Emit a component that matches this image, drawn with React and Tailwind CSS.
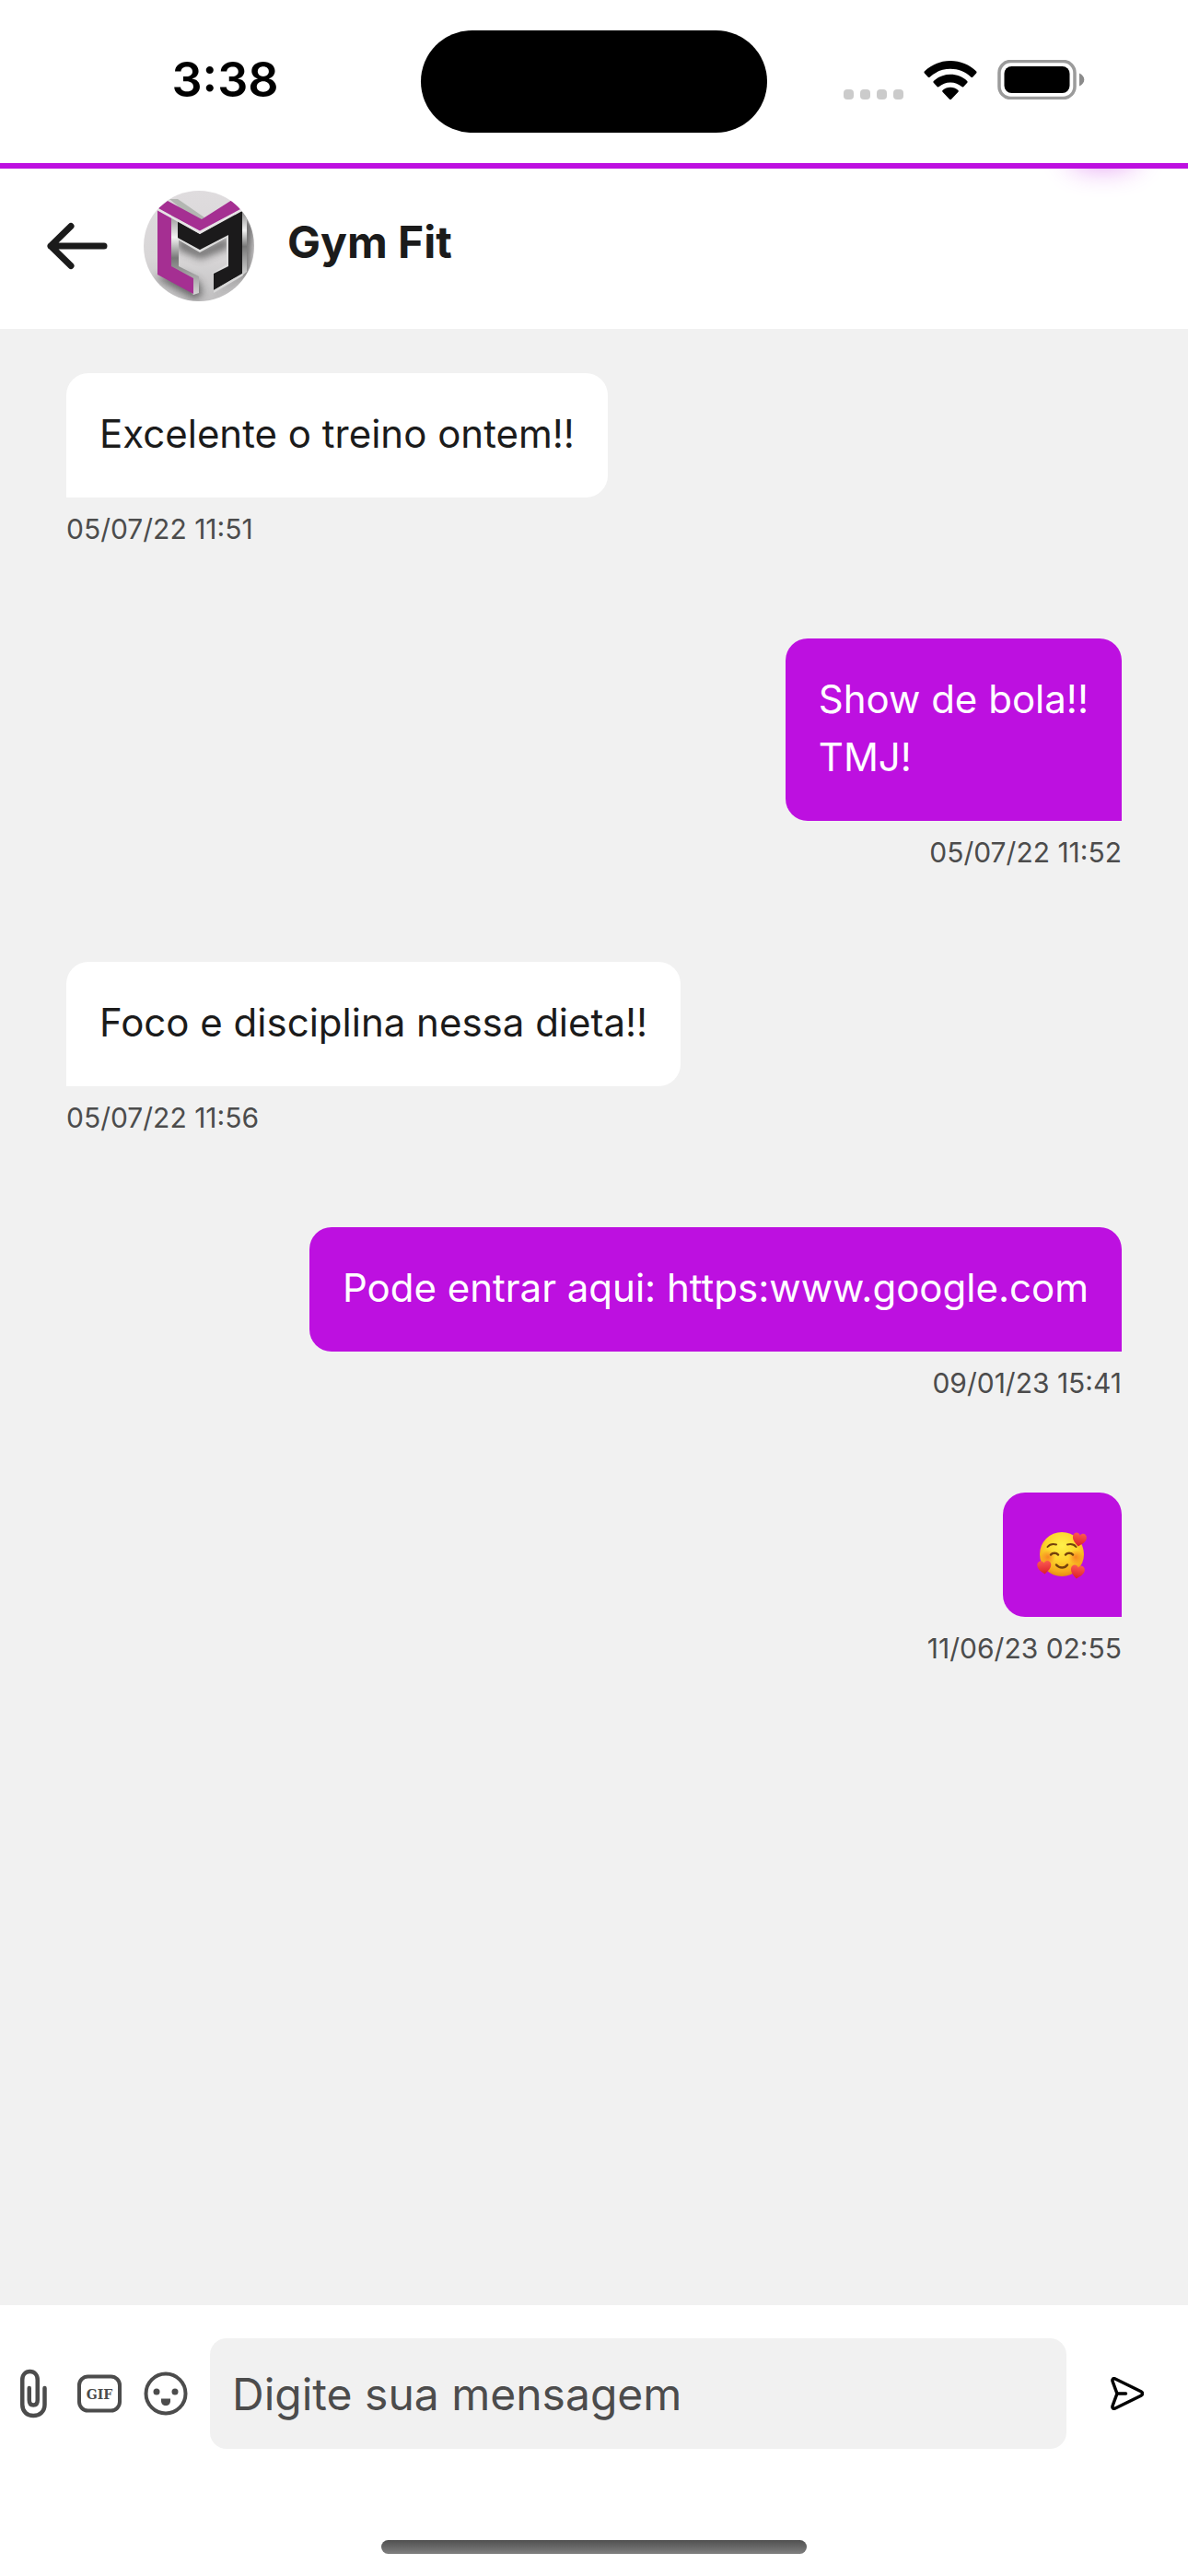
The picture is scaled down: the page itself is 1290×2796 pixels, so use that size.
import React, { useState } from "react";

const messages = [
  { id: 1, text: "Excelente o treino ontem!!", date: "05/07/22 11:51", mine: false },
  { id: 2, text: "Show de bola!!\nTMJ!", date: "05/07/22 11:52", mine: true },
  { id: 3, text: "Foco e disciplina nessa dieta!!", date: "05/07/22 11:56", mine: false },
  { id: 4, text: "Pode entrar aqui: https:www.google.com", date: "09/01/23 15:41", mine: true },
  { id: 5, emoji: true, date: "11/06/23 02:55", mine: true },
];

const SignalIcon = () => (
  <svg width="66" height="42" viewBox="0 0 66 42" fill="#cbcbcb">
    <rect x="1" y="31" width="11" height="11" rx="4" />
    <rect x="19" y="31" width="11" height="11" rx="4" />
    <rect x="37" y="31" width="11" height="11" rx="4" />
    <rect x="55" y="31" width="11" height="11" rx="4" />
  </svg>
);

const WifiIcon = () => (
  <svg width="58" height="42" viewBox="0 0 58 42" fill="#000">
    <path d="M29 0C18.300 0 8.400 4.200 1 11.300c-.7.700-.7 1.500-.1 2.200l3.700 4c.6.700 1.500.7 2.200 0C12.600 12 20.400 8.800 29 8.800S45.400 12 51.200 17.500c.7.700 1.600.7 2.200 0l3.700-4c.6-.7.6-1.500-.1-2.200C49.600 4.200 39.700 0 29 0z" />
    <path d="M29 14.800c-6.900 0-13.200 2.600-18 6.900-.8.700-.8 1.600-.1 2.300l3.700 4c.6.700 1.400.7 2.100.1 3.300-2.900 7.600-4.700 12.300-4.700s9 1.800 12.300 4.700c.7.600 1.500.6 2.100-.1l3.700-4c.7-.7.7-1.600-.1-2.300-4.800-4.300-11.100-6.900-18-6.900z" />
    <path d="M29 28.800c-3.100 0-6 1.100-8.200 3-.8.700-.8 1.500-.1 2.200l7.100 7.400c.7.700 1.700.7 2.400 0l7.100-7.400c.7-.7.7-1.500-.1-2.200-2.200-1.900-5.100-3-8.200-3z" />
  </svg>
);

const BatteryIcon = () => (
  <svg width="95" height="43" viewBox="0 0 95 43">
    <rect x="2" y="1.500" width="82" height="40" rx="12.500" fill="none" stroke="#9b9b9b" strokeWidth="3.500" />
    <rect x="7.500" y="7" width="71" height="29" rx="8" fill="#000" />
    <path d="M89 14.500c3.200 1.400 5.300 4 5.300 7s-2.100 5.600-5.300 7z" fill="#8b8b8b" />
  </svg>
);

const BackIcon = () => (
  <svg width="66" height="52" viewBox="0 0 66 52" fill="none" stroke="#1b1b1b" strokeWidth="7" strokeLinecap="round" strokeLinejoin="round">
    <path d="M62 26H4M26 4.500 4 26l22 21.500" />
  </svg>
);

const GymLogo = () => (
  <svg className="size-[120px] rounded-full" viewBox="0 0 120 120" role="img" aria-label="Gym Fit">
    <defs>
      <linearGradient id="bg" x1="0" y1="0" x2="0" y2="1">
        <stop offset="0" stopColor="#dfdcde" />
        <stop offset="0.600" stopColor="#d8d6d7" />
        <stop offset="1" stopColor="#c2c1c2" />
      </linearGradient>
      <linearGradient id="steel" x1="0" y1="0" x2="0" y2="1">
        <stop offset="0" stopColor="#8a8a8a" />
        <stop offset="0.300" stopColor="#f3f3f3" />
        <stop offset="0.550" stopColor="#777" />
        <stop offset="1" stopColor="#d5d5d5" />
      </linearGradient>
      <filter id="soft" x="-30%" y="-30%" width="160%" height="160%">
        <feGaussianBlur stdDeviation="4" />
      </filter>
    </defs>
    <rect width="120" height="120" fill="url(#bg)" />
    <g filter="url(#soft)" fill="#3c3c3c" opacity="0.700">
      <path d="M36 48 61 64 92 50V62L62 74 38 64z" />
      <path d="M12 94 56 118 64 112 60 98 40 90z" />
      <path d="M76 114 114 92 120 34 104 26 106 92z" />
    </g>
    <path d="M28 9 37 9 66 29 60 36z" fill="#b3b6b2" />
    <path d="M30 24 38 32V82L60 93V111L54 113 28 84z" fill="url(#steel)" />
    <path d="M106 22 112 25V88L107 92z" fill="url(#steel)" />
    <path d="M37 51 61 64 92 48V82L76 90 74 90 90 80V51L61 67 37 53z" fill="#dedede" />
    <path d="M37 33 61 47 105 22 107 23V90L76 108V90L92 82V48L61 64 37 51z" fill="#1b1a1b" />
    <path d="M15 21 30 29V82L54 95V112L15 91z" fill="#a52f92" />
    <path d="M16 19 26 11 63 31 96 10 106 20 61 44z" fill="#a52f92" />
    <path d="M16 19.500 61 43.500 106 19.500 107 22 61 47 15 21.500z" fill="#e6e3e5" />
    <path d="M76 108 107 90 108 92 76 111z" fill="#d8d8d8" />
  </svg>
);

const Heart = ({ x, y, rotate }) => (
  <path
    transform={`translate(${x} ${y}) rotate(${rotate})`}
    d="M0 7.500C-4 4.500-7.500 1.500-7.500-2.500-7.500-7-2-8.500 0-4.500 2-8.500 7.500-7 7.500-2.500 7.500 1.500 4 4.500 0 7.500z"
    fill="url(#heart)"
  />
);

const LoveEmoji = () => (
  <svg width="57" height="63" viewBox="0 -3 57 63" role="img" aria-label="Rosto sorridente com corações">
    <defs>
      <radialGradient id="face" cx="0.500" cy="0.300" r="0.700">
        <stop offset="0" stopColor="#fff04a" />
        <stop offset="0.500" stopColor="#fdd52c" />
        <stop offset="0.850" stopColor="#f5a81c" />
        <stop offset="1" stopColor="#e58c12" />
      </radialGradient>
      <radialGradient id="cheek">
        <stop offset="0" stopColor="#f5671f" stopOpacity="0.700" />
        <stop offset="1" stopColor="#f5671f" stopOpacity="0" />
      </radialGradient>
      <linearGradient id="heart" x1="0" y1="0" x2="0" y2="1">
        <stop offset="0" stopColor="#fb5a50" />
        <stop offset="1" stopColor="#dc1f2a" />
      </linearGradient>
    </defs>
    <circle cx="28" cy="30" r="24" fill="url(#face)" />
    <circle cx="13" cy="33" r="8" fill="url(#cheek)" />
    <circle cx="43" cy="33" r="8" fill="url(#cheek)" />
    <g fill="none" stroke="#74410c" strokeWidth="2" strokeLinecap="round">
      <path d="M12.500 22c2-2.500 6-3.500 9.500-2.500M34 19.500c4-1 7.500 0 9.500 2.500" />
      <path d="M16 30.500c2-2.500 6-2.500 8 0M32 30.500c2-2.500 6-2.500 8 0" strokeWidth="2.500" />
      <path d="M22 41.500c3.500 4 9 4 12 0" strokeWidth="2.500" />
    </g>
    <Heart x={47} y={14} rotate={10} />
    <Heart x={9} y={44} rotate={-5} />
    <Heart x={45} y={49} rotate={10} />
  </svg>
);

const ClipIcon = () => (
  <svg width="30" height="54" viewBox="0 0 30 54" fill="none" stroke="#4c4c4c" strokeWidth="4.500" strokeLinecap="round">
    <path d="M26.500 21v18c0 7.500-5.500 12-12.250 12S2.250 46.500 2.250 39V12c0-5.500 3.500-9 8.250-9s8.250 3.500 8.250 9v22c0 3.500-1.750 5.500-4.500 5.500S9.750 37.500 9.750 34V21" />
  </svg>
);

const GifIcon = () => (
  <svg width="48" height="54" viewBox="0 0 48 54">
    <rect x="2" y="8.500" width="44" height="37" rx="9.500" fill="none" stroke="#4c4c4c" strokeWidth="4" />
    <text x="24" y="33" textAnchor="middle" fill="#4c4c4c" fontFamily="DejaVu Serif, serif" fontWeight="700" fontSize="14">GIF</text>
  </svg>
);

const SmileIcon = () => (
  <svg width="48" height="54" viewBox="0 0 48 54">
    <circle cx="24" cy="27" r="21.500" fill="none" stroke="#4c4c4c" strokeWidth="4" />
    <circle cx="14" cy="25" r="3.500" fill="#4c4c4c" />
    <circle cx="34" cy="25" r="3.500" fill="#4c4c4c" />
    <path d="M19 32.500h10V35c0 3-2 5-5 5s-5-2-5-5z" fill="#4c4c4c" />
  </svg>
);

const SendIcon = () => (
  <svg width="36" height="36" viewBox="0 0 36 36" fill="none" stroke="#000" strokeWidth="3.500" strokeLinecap="round" strokeLinejoin="round">
    <path d="M7 18 2.200 5c-.9-2.400.7-4 2.800-3L33 15.800c2 1 2 3.400 0 4.400L5 34c-2.100 1-3.700-.6-2.800-3L7 18h9.500" />
  </svg>
);

const Message = ({ message }) => {
  const { text, emoji, date, mine } = message;
  return (
    <li className={mine ? "flex flex-col items-end" : "flex flex-col items-start"}>
      <div
        className={
          mine
            ? "rounded-3xl rounded-br-none bg-[#bd10e0] px-9 pt-[34px] pb-[38px] text-white"
            : "rounded-3xl rounded-bl-none bg-white px-9 pt-[34px] pb-[38px] text-[#1b1b1b]"
        }
      >
        {emoji ? (
          <LoveEmoji />
        ) : (
          <p className="whitespace-pre-line text-[42px] leading-[63px]">{text}</p>
        )}
      </div>
      <time className="mt-3 text-[30px] leading-[45px] text-[#4c4c4c]">{date}</time>
    </li>
  );
};

export default function App() {
  const [draft, setDraft] = useState("");

  const handleSubmit = (e) => {
    e.preventDefault();
    setDraft("");
  };

  return (
    <div className="flex min-h-screen flex-col bg-white font-[Inter,sans-serif]">
      {/* Status bar */}
      <div className="grid h-[177px] grid-cols-[1fr_auto_1fr] items-center">
        <span className="pb-1 pl-8 text-center text-[52px] font-semibold leading-none text-black">3:38</span>
        <div className="h-[111px] w-[376px] rounded-full bg-black" />
        <div className="flex items-center justify-end gap-[22px] pb-1 pr-28">
          <SignalIcon />
          <WifiIcon />
          <BatteryIcon />
        </div>
      </div>

      {/* Chat header */}
      <header className="relative flex h-[180px] items-center overflow-hidden border-t-6 border-[#bd10e0] bg-white pb-1.5 pl-[51px]">
        <span className="absolute -top-10 right-14 h-9 w-[72px] rounded-full opacity-50 shadow-[0_0_32px_0_#bd10e0]" />
        <button type="button" aria-label="Voltar">
          <BackIcon />
        </button>
        <div className="ml-[39px]">
          <GymLogo />
        </div>
        <h1 className="ml-9 pb-2 text-[48px] font-bold leading-[60px] text-[#1b1b1b]">Gym Fit</h1>
      </header>

      <main className="flex-1 bg-[#f1f1f1] px-18 pt-12">
        <ul className="flex flex-col gap-24">
          {messages.map((message) => (
            <Message key={message.id} message={message} />
          ))}
        </ul>
      </main>

      {/* Composer */}
      <footer className="flex flex-col bg-white">
        <form className="flex items-center pl-[22px] pt-9 pr-12" onSubmit={handleSubmit}>
          <button type="button" aria-label="Anexar arquivo">
            <ClipIcon />
          </button>
          <button type="button" aria-label="Enviar GIF" className="ml-8">
            <GifIcon />
          </button>
          <button type="button" aria-label="Emojis" className="ml-6">
            <SmileIcon />
          </button>
          <input
            type="text"
            aria-label="Mensagem"
            placeholder="Digite sua mensagem"
            value={draft}
            onChange={(e) => setDraft(e.target.value)}
            className="ml-6 h-[120px] min-w-0 flex-1 rounded-[18px] bg-[#f1f1f1] px-6 text-[48px] text-[#1b1b1b] outline-none placeholder:text-[#4c4c4c]"
          />
          <button type="submit" aria-label="Enviar" className="ml-12">
            <SendIcon />
          </button>
        </form>
        <div className="mt-[99px] mb-6 h-[15px] w-[462px] self-center rounded-full bg-linear-to-b from-[#505050] to-[#808080]" />
      </footer>
    </div>
  );
}
